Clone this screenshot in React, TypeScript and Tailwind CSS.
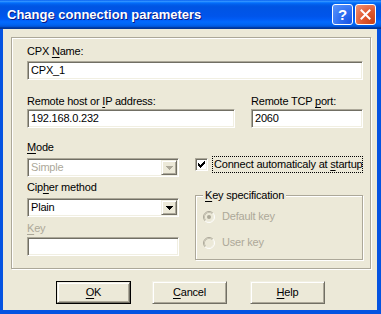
import type { ReactNode } from 'react';

const sunken =
  'border border-t-[#aca899] border-l-[#aca899] border-b-white border-r-white shadow-[inset_1px_1px_0_#716f64,inset_-1px_-1px_0_#f1efe2]';
const raised =
  'border border-t-[#f1efe2] border-l-[#f1efe2] border-b-[#716f64] border-r-[#716f64] shadow-[inset_1px_1px_0_#fff,inset_-1px_-1px_0_#aca899]';

function U({ children }: { children: ReactNode }) {
  return <span className="underline underline-offset-[2px] decoration-1">{children}</span>;
}

function Label({ children, gray, className = '' }: { children: ReactNode; gray?: boolean; className?: string }) {
  return (
    <div className={`h-[13px] leading-[13px] whitespace-nowrap ${gray ? 'text-[#aca899]' : 'text-black'} ${className}`}>
      {children}
    </div>
  );
}

function Edit({ value = '', className = '' }: { value?: string; className?: string }) {
  return (
    <div className={`h-[19px] bg-white ${sunken} pl-[3px] flex items-center leading-[13px] ${className}`}>
      <span>{value}</span>
    </div>
  );
}

function Arrow({ color }: { color: string }) {
  return (
    <svg width="7" height="4" viewBox="0 0 7 4" shapeRendering="crispEdges">
      <path d="M0 0h7v1h-1v1h-1v1h-1v1h-1v-1h-1v-1h-1v-1h-1z" fill={color} />
    </svg>
  );
}

function Combo({ value, disabled, className = '' }: { value: string; disabled?: boolean; className?: string }) {
  return (
    <div className={`h-[19px] bg-white ${sunken} p-[1px] flex ${className}`}>
      <div className={`flex-1 flex items-center pl-[2px] ${disabled ? 'text-[#aca899]' : 'text-black'}`}>
        <span>{value}</span>
      </div>
      <div className={`w-[16px] bg-[#ece9d8] ${raised} flex items-center justify-center`}>
        <Arrow color={disabled ? '#aca899' : '#000'} />
      </div>
    </div>
  );
}

function Radio({ checked }: { checked?: boolean }) {
  return (
    <svg width="12" height="12" viewBox="0 0 12 12">
      <circle cx="6" cy="6" r="5" fill="#ece9d8" />
      <path d="M2.11 9.89 A5.5 5.5 0 0 1 9.89 2.11" stroke="#aca899" fill="none" />
      <path d="M9.89 2.11 A5.5 5.5 0 0 1 2.11 9.89" stroke="#fff" fill="none" />
      <path d="M2.82 9.18 A4.5 4.5 0 0 1 9.18 2.82" stroke="#c5c2b2" fill="none" />
      <path d="M9.18 2.82 A4.5 4.5 0 0 1 2.82 9.18" stroke="#f1efe2" fill="none" />
      {checked && <circle cx="6" cy="6" r="2" fill="#aca899" />}
    </svg>
  );
}

function Button({ children, isDefault, className = '' }: { children: ReactNode; isDefault?: boolean; className?: string }) {
  const label = <span className="whitespace-nowrap">{children}</span>;
  if (isDefault) {
    return (
      <div className={`w-[75px] h-[23px] border border-black flex ${className}`}>
        <div className={`flex-1 bg-[#ece9d8] ${raised} flex items-center justify-center`}>{label}</div>
      </div>
    );
  }
  return (
    <div className={`w-[75px] h-[23px] bg-[#ece9d8] ${raised} flex items-center justify-center ${className}`}>
      {label}
    </div>
  );
}

export default function App() {
  return (
    <div className="w-[381px] h-[314px] overflow-hidden flex flex-col font-['Liberation_Sans',Arial,sans-serif] text-[11px] tracking-[-0.2px]">
      {/* Title bar */}
      <div className="h-[29px] flex items-center pl-[7px] pr-[5px] bg-[linear-gradient(180deg,#0058ee_0%,#3593ff_4%,#288eff_6%,#127dff_8%,#036ffc_10%,#0262ee_14%,#0057e5_20%,#0054e3_24%,#0055eb_56%,#005bf5_66%,#026afe_76%,#0062ef_86%,#0052d6_92%,#0040ab_94%,#003092_100%)]">
        <span className="flex-1 pt-[1px] text-white font-bold text-[13px] tracking-normal [text-shadow:1px_1px_#0a1883]">
          Change connection parameters
        </span>
        <div className="flex gap-[2px]">
          <div className="w-[21px] h-[21px] rounded-[3px] border border-white bg-[radial-gradient(circle_at_90%_90%,#1a56e6_0%,#2f6ff2_45%,#5d97fb_100%)] flex items-center justify-center text-white font-bold text-[15px] leading-none">
            ?
          </div>
          <div className="w-[21px] h-[21px] rounded-[3px] border border-white bg-[radial-gradient(circle_at_90%_90%,#cc4418_0%,#e0582f_45%,#f29478_100%)] flex items-center justify-center">
            <svg width="11" height="11" viewBox="0 0 11 11">
              <path d="M1.5 1.5l8 8M9.5 1.5l-8 8" stroke="#fff" strokeWidth="2" strokeLinecap="square" />
            </svg>
          </div>
        </div>
      </div>

      {/* Body */}
      <div className="flex-1 bg-[#ece9d8] border-l-[3px] border-r-[4px] border-b-[4px] border-[#0553e1] flex flex-col">
        <div className="ml-[8px] mt-[8px] w-[360px] h-[232px] border border-[#aca899] shadow-[inset_1px_1px_0_#fff,1px_1px_0_#fff] pl-[15px] pr-[7px] pt-[7px] flex flex-col">
          <Label>
            CPX <U>N</U>ame:
          </Label>
          <Edit value="CPX_1" className="mt-[3px]" />

          <div className="flex gap-[16px] mt-[15px]">
            <div className="w-[208px] flex flex-col">
              <Label>
                Remote host or <U>I</U>P address:
              </Label>
              <Edit value="192.168.0.232" className="mt-[1px]" />
            </div>
            <div className="w-[112px] flex flex-col">
              <Label>
                Remote TCP <U>p</U>ort:
              </Label>
              <Edit value="2060" className="mt-[1px]" />
            </div>
          </div>

          <div className="flex gap-[16px] mt-[13px]">
            <div className="w-[152px] flex flex-col">
              <Label>
                <U>M</U>ode
              </Label>
              <Combo value="Simple" disabled className="mt-[4px]" />
              <Label className="mt-[4px]">
                Cip<U>h</U>er method
              </Label>
              <Combo value="Plain" className="mt-[4px]" />
              <Label gray className="mt-[5px]">
                <U>K</U>ey
              </Label>
              <Edit className="mt-[2px]" />
            </div>

            <div className="w-[168px] flex flex-col">
              <div className="mt-[15px] h-[17px] flex items-center">
                <div className={`w-[13px] h-[13px] bg-white ${sunken} flex items-center justify-center`}>
                  <svg width="7" height="7" viewBox="0 0 7 7" shapeRendering="crispEdges">
                    <path
                      d="M6 0h1v3h-1v1h-1v1h-1v1h-1v1h-1v-1h-1v-1h-1v-3h1v1h1v1h1v-1h1v-1h1z"
                      fill="#000"
                    />
                  </svg>
                </div>
                <div className="ml-[4px] h-[17px] flex-1 min-w-0 border border-dotted border-black flex items-center pl-[1px] leading-[13px] whitespace-nowrap">
                  <span>
                    Connect automaticaly at <U>s</U>tartup
                  </span>
                </div>
              </div>

              <div className="relative mt-[22px] h-[65px] border border-[#aca899] shadow-[inset_1px_1px_0_#fff,1px_1px_0_#fff] pl-[7px] pt-[14px] flex flex-col">
                <span className="absolute left-[7px] top-[-7px] px-[2px] bg-[#ece9d8] leading-[13px] whitespace-nowrap">
                  <U>K</U>ey specification
                </span>
                <div className="h-[13px] flex items-center gap-[7px] text-[#aca899]">
                  <Radio checked />
                  <span>Default key</span>
                </div>
                <div className="mt-[13px] h-[13px] flex items-center gap-[7px] text-[#aca899]">
                  <Radio />
                  <span>User key</span>
                </div>
              </div>
            </div>
          </div>
        </div>

        <div className="flex mt-[12px] pl-[53px]">
          <Button isDefault>
            <U>O</U>K
          </Button>
          <Button className="ml-[21px]">
            <U>C</U>ancel
          </Button>
          <Button className="ml-[23px]">
            <U>H</U>elp
          </Button>
        </div>
      </div>
    </div>
  );
}
